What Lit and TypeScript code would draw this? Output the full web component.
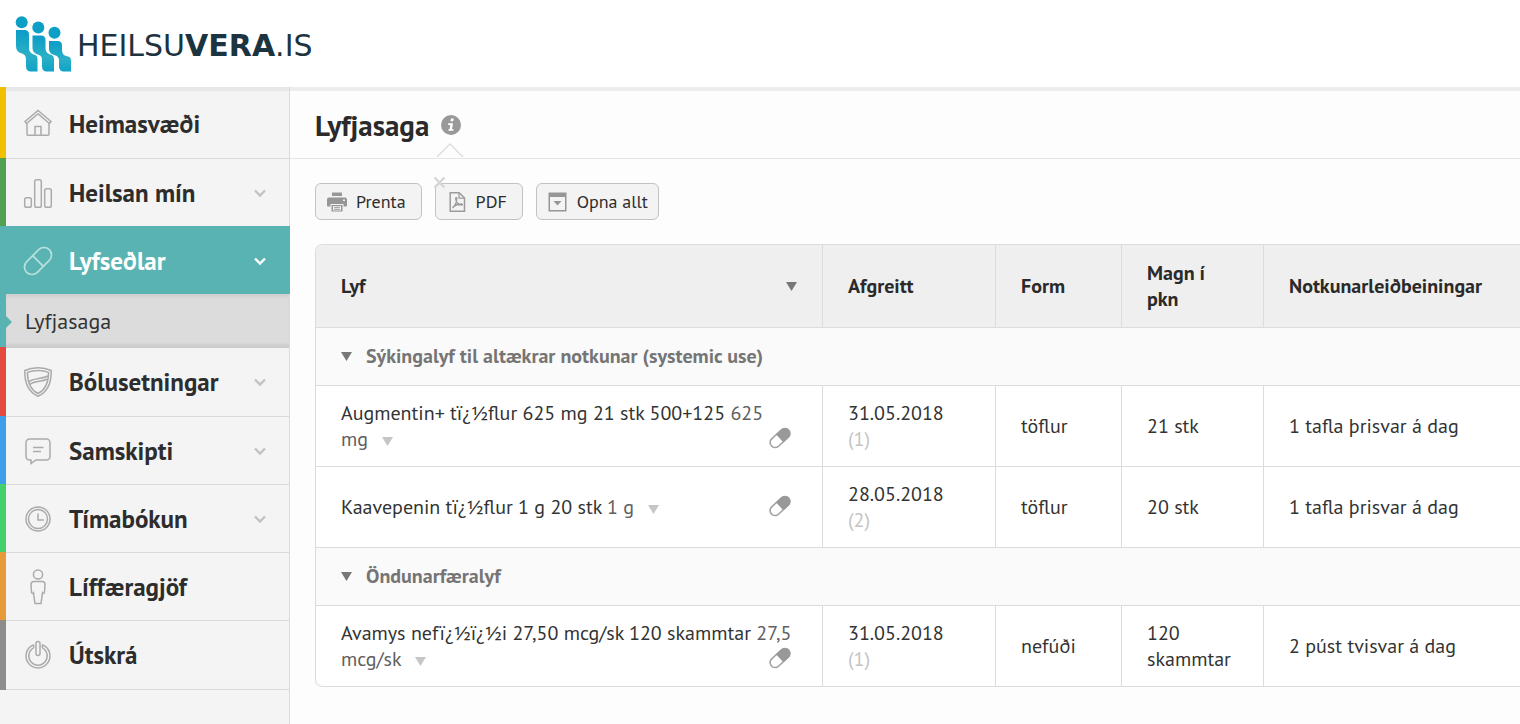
import { LitElement, html, css, svg, nothing, type TemplateResult } from "lit";
import { customElement, state } from "lit/decorators.js";
import { classMap } from "lit/directives/class-map.js";

interface MenuItem {
  id: string;
  label: string;
  icon: TemplateResult;
  expandable: boolean;
  active?: boolean;
  children?: string[];
}

interface Medicine {
  name: string;
  strength: string;
  strengthTail: string;
  date: string;
  count: number;
  form: string;
  amount: string;
  usage: string;
}

interface Group {
  title: string;
  rows: Medicine[];
}

const MENU: MenuItem[] = [
  {
    id: "home",
    label: "Heimasvæði",
    expandable: false,
    icon: svg`<path d="M2 12.500 15 1.500l13 11-1.600 2L15 4.800 3.600 14.500z"/><path d="M4 14.500V25.500a.8.800 0 0 0 .8.800h20.400a.8.800 0 0 0 .8-.8V14.500M12 26.300V17.500h6v8.800"/>`,
  },
  {
    id: "health",
    label: "Heilsan mín",
    expandable: true,
    icon: svg`<rect x="1.700" y="19.700" width="6.600" height="9.600" rx="1.800"/><rect x="11.700" y="1.700" width="6.600" height="27.600" rx="1.800"/><rect x="21.700" y="10.700" width="6.600" height="18.600" rx="1.800"/>`,
  },
  {
    id: "rx",
    label: "Lyfseðlar",
    expandable: true,
    active: true,
    children: ["Lyfjasaga"],
    icon: svg`<g transform="rotate(-45 15 15)"><rect x="-1" y="7.500" width="32" height="15" rx="7.500"/><path d="M15 7.500v15"/></g>`,
  },
  {
    id: "vaccine",
    label: "Bólusetningar",
    expandable: true,
    icon: svg`<path d="M15 .8c4 0 9.500 1 13.200 2.700C28.500 14 25.500 24.500 15 29.300 4.500 24.500 1.500 14 1.800 3.500 5.500 1.800 11 .8 15 .8z"/><path d="M15 3.500c3.600 0 7.800.7 10.600 1.900C25.500 14.300 23.300 22.300 15 26.500 6.700 22.300 4.500 14.300 4.400 5.400c2.800-1.200 7-1.900 10.600-1.900z"/><path d="M5.500 14.800C11.500 10.800 18 12.300 25 9M6.500 17.500c6-4 11.800-2.300 17.800-5.500"/>`,
  },
  {
    id: "messages",
    label: "Samskipti",
    expandable: true,
    icon: svg`<path d="M6.500 3h17a3.500 3.500 0 0 1 3.500 3.500v14a3.500 3.500 0 0 1-3.500 3.500H13l-5 3.500V24H6.500A3.500 3.500 0 0 1 3 20.500v-14A3.500 3.500 0 0 1 6.500 3zM10 11.500h10.500M10 15.500h8"/>`,
  },
  {
    id: "booking",
    label: "Tímabókun",
    expandable: true,
    icon: svg`<circle cx="15" cy="15" r="12"/><circle cx="15" cy="15" r="9.500"/><path d="M15 9.500V16h6"/>`,
  },
  {
    id: "donor",
    label: "Líffæragjöf",
    expandable: false,
    icon: svg`<circle cx="15" cy="2.500" r="4.600"/><path d="M11 9.500h8c2 0 3 1 3 3l-.5 7.500c0 1.500-1.200 1.800-2 .8L18 31.500h-6l-1.500-10.700c-.8 1-2 .7-2-.8L8 12.500c0-2 1-3 3-3z"/>`,
  },
  {
    id: "logout",
    label: "Útskrá",
    expandable: false,
    icon: svg`<rect x="13" y="1.500" width="4" height="14" rx="2"/><path d="M10.700 4.700a12 12 0 1 0 8.600 0M10.700 7.800a9.200 9.200 0 1 0 8.600 0M10.700 4.700v3.100M19.300 4.700v3.100"/>`,
  },
];

const GROUPS: Group[] = [
  {
    title: "Sýkingalyf til altækrar notkunar (systemic use)",
    rows: [
      {
        name: "Augmentin+ tï¿½flur 625 mg 21 stk 500+125",
        strength: "625",
        strengthTail: "mg",
        date: "31.05.2018",
        count: 1,
        form: "töflur",
        amount: "21 stk",
        usage: "1 tafla þrisvar á dag",
      },
      {
        name: "Kaavepenin tï¿½flur 1 g 20 stk",
        strength: "1",
        strengthTail: "g",
        date: "28.05.2018",
        count: 2,
        form: "töflur",
        amount: "20 stk",
        usage: "1 tafla þrisvar á dag",
      },
    ],
  },
  {
    title: "Öndunarfæralyf",
    rows: [
      {
        name: "Avamys nefï¿½ï¿½i 27,50 mcg/sk 120 skammtar",
        strength: "27,5",
        strengthTail: "mcg/sk",
        date: "31.05.2018",
        count: 1,
        form: "nefúði",
        amount: "120 skammtar",
        usage: "2 púst tvisvar á dag",
      },
    ],
  },
];

@customElement("site-header")
export class SiteHeader extends LitElement {
  static styles = css`
    :host {
      display: block;
      background: #fff;
    }
    .brand {
      display: inline-flex;
      align-items: center;
      gap: 5px;
      height: 87px;
      padding-left: 15px;
      color: #1b3440;
      text-decoration: none;
    }
    .mark {
      display: block;
      width: 57px;
      height: 56px;
      fill: #0d9fc6;
    }
    .word {
      font: 400 30px/32px "DejaVu Sans", sans-serif;
      padding-top: 4px;
    }
    .word strong {
      font-weight: 700;
    }
  `;

  render() {
    return html`
      <a class="brand" href="#">
        <svg class="mark" viewBox="0 0 57 56" aria-hidden="true">
          <defs>
            <linearGradient id="tone" x1="0" y1="0" x2="0" y2="1">
              <stop offset="0" stop-color="#0c9cc8" />
              <stop offset=".6" stop-color="#2ab0c6" />
              <stop offset="1" stop-color="#0fa2c6" />
            </linearGradient>
          </defs>
          <circle cx="6.700" cy="6.300" r="6" />
          <circle cx="23.300" cy="11.500" r="6" />
          <circle cx="39.500" cy="16.800" r="6" />
          <g fill="url(#tone)">
            <path d="M1 14h8.500c3 0 4.500 1.600 4.500 4.500V32c0 3.500 2 6 6.500 7 1.500.8 2 2.500 2 4.500v12h-6c-4 0-5.500-2-5.500-5.500V44c0-3.500-1-5.500-4-6.500C3 36.500 1 34 1 30z" />
            <path d="M17.500 19.500H26c3 0 4.500 1.600 4.500 4.500v8.500c0 3.500 2 5.500 6 6.500 2 .8 2.500 2.500 2.500 5v11.500h-6.500c-4 0-5.500-2-5.500-5.500V44c0-3-1-4.500-3.500-5.300-4-1-6-3.200-6-6.700z" />
            <path d="M34 25h8.500c3 0 4.500 1.600 4.500 4.500V34c0 3.500 1.500 5.500 5 6.200 3.500.6 4 2.300 4 4.800v10.500h-6.500c-4 0-5.500-2-5.500-5.500v-5.500c0-2.500-1-4-3.500-5-4-1-6.500-3-6.500-7z" />
          </g>
        </svg>
        <span class="word">HEILSU<strong>VERA</strong>.IS</span>
      </a>
    `;
  }
}

@customElement("side-menu")
export class SideMenu extends LitElement {
  static styles = css`
    :host {
      display: block;
      box-sizing: border-box;
      background: #f4f4f4;
      border-right: 1px solid #dcdcdc;
      font-family: "PT Sans", "Noto Sans", sans-serif;
    }
    .list,
    .sub {
      margin: 0;
      padding: 0;
      list-style: none;
    }
    .entry {
      padding-left: 6px;
      background: var(--tone);
    }
    .link {
      display: grid;
      grid-template-columns: 28px 1fr 12px;
      align-items: center;
      column-gap: 16px;
      box-sizing: border-box;
      height: 68px;
      padding: 0 23px 0 19px;
      border-top: 1px solid #d9d9d9;
      background: #f4f4f4;
      color: #2d2d2d;
      font-size: 25px;
      line-height: 32px;
      font-weight: 700;
      text-decoration: none;
    }
    .home {
      --tone: #f1bf00;
    }
    .home .link {
      height: 71px;
      padding-top: 3px;
      border-top: 0;
      box-shadow: inset 0 4px 0 #e7e7e7;
    }
    .health {
      --tone: #52a150;
    }
    .rx {
      --tone: #5ab3b3;
    }
    .vaccine {
      --tone: #e44b3e;
    }
    .vaccine .link {
      height: 69px;
      border-top-color: #cccccc;
    }
    .messages {
      --tone: #3f9ee8;
    }
    .booking {
      --tone: #43d16b;
    }
    .donor {
      --tone: #e79b38;
    }
    .logout {
      --tone: #8d8d8d;
    }
    .logout .link {
      height: 70px;
      border-bottom: 1px solid #d9d9d9;
    }
    .active .link {
      background: #5ab3b3;
      border-top-color: #5ab3b3;
      color: #fff;
      margin-right: -1px;
      padding-right: 24px;
    }
    .icon {
      width: 30px;
      height: 30px;
      margin-left: -2px;
      overflow: visible;
      fill: none;
      stroke: #ababab;
      stroke-width: 1.5;
    }
    .active .icon {
      stroke: #b9e0e0;
      stroke-width: 1.7;
    }
    .chevron {
      width: 12px;
      height: 12px;
      fill: none;
      stroke: #c2c2c2;
      stroke-width: 2.4;
    }
    .active .chevron {
      stroke: #fff;
    }
    .sublink {
      position: relative;
      display: block;
      padding: 13px 19px 12px;
      background: #dcdcdc;
      box-shadow:
        inset 0 4px 3px -1px #cfcfcf,
        inset 0 -4px 3px -1px #cccccc;
      color: #333;
      font-size: 22px;
      line-height: 28px;
      text-decoration: none;
    }
    .sublink::before {
      content: "";
      position: absolute;
      left: 0;
      top: 22px;
      border: 6px solid transparent;
      border-right: 0;
      border-left-color: #5ab3b3;
    }
  `;

  render() {
    return html`
      <nav aria-label="Valmynd">
        <ul class="list">
          ${MENU.map(
            (item) => html`
              <li class=${classMap({ entry: true, [item.id]: true, active: !!item.active })}>
                <a class="link" href="#${item.id}">
                  <svg class="icon" viewBox="0 0 30 30" aria-hidden="true">${item.icon}</svg>
                  <span>${item.label}</span>
                  ${item.expandable
                    ? html`<svg class="chevron" viewBox="0 0 12 12" aria-hidden="true">
                        <path d="M1 3.500 6 8.500l5-5" />
                      </svg>`
                    : nothing}
                </a>
                ${item.children
                  ? html`<ul class="sub">
                      ${item.children.map(
                        (child) => html`<li><a class="sublink" href="#${child}">${child}</a></li>`
                      )}
                    </ul>`
                  : nothing}
              </li>
            `
          )}
        </ul>
      </nav>
    `;
  }
}

@customElement("medicine-table")
export class MedicineTable extends LitElement {
  static styles = css`
    :host {
      display: block;
      overflow-x: auto;
      scrollbar-width: none;
      font-family: "PT Sans", "Noto Sans", sans-serif;
      color: #333;
    }
    .table {
      width: 100%;
      min-width: 1230px;
      table-layout: fixed;
      border-collapse: separate;
      border-spacing: 0;
      border: 1px solid #dcdcdc;
      border-bottom: 0;
      border-radius: 7px;
      background: #fff;
      font-size: 20px;
      line-height: 26px;
    }
    .c-drug {
      width: 506px;
    }
    .c-date {
      width: 173px;
    }
    .c-form {
      width: 126px;
    }
    .c-amount {
      width: 142px;
    }
    .head,
    .cell {
      padding: 14px 25px;
      border-bottom: 1px solid #dcdcdc;
      border-left: 1px solid #dcdcdc;
      text-align: left;
      vertical-align: middle;
    }
    .head:first-child,
    .cell:first-child {
      border-left: 0;
    }
    .head {
      padding: 15px 25px;
      background: #efefef;
      color: #2a2a2a;
      font-weight: 700;
    }
    .head:first-child {
      border-top-left-radius: 6px;
    }
    .last .cell:first-child {
      border-bottom-left-radius: 7px;
    }
    .sort,
    .toggle {
      display: flex;
      align-items: center;
      width: 100%;
      padding: 0;
      border: 0;
      background: none;
      color: inherit;
      font: inherit;
      text-align: left;
    }
    .sort {
      justify-content: space-between;
    }
    .toggle {
      gap: 14px;
    }
    .group {
      padding: 15px 25px 16px;
      border-bottom: 1px solid #dcdcdc;
      background: #fafafa;
      color: #757575;
      font-weight: 700;
      text-align: left;
    }
    .tri {
      width: 11px;
      height: 9px;
      fill: #777;
    }
    .tail {
      white-space: nowrap;
    }
    .strength {
      color: #606060;
    }
    .more {
      padding: 0;
      border: 0;
      margin-left: 9px;
      background: none;
      line-height: 0;
    }
    .more .tri {
      fill: #c6c6c6;
    }
    .pill {
      float: right;
      width: 22px;
      height: 22px;
      margin: 1px 6px 0 0;
    }
    .count {
      color: #c4c4c4;
      text-decoration: none;
    }
  `;

  private tri() {
    return html`<svg class="tri" viewBox="0 0 11 9" aria-hidden="true"><path d="M0 0h11L5.500 9z" /></svg>`;
  }

  private row(m: Medicine, last: boolean) {
    return html`
      <tr class=${classMap({ last })}>
        <td class="cell">
          ${m.name}
          <span class="strength"
            >${m.strength}
            <span class="tail"
              >${m.strengthTail}
              <button class="more" type="button" aria-label="Nánar">${this.tri()}</button></span
            ></span
          >
          <svg class="pill" viewBox="0 0 22 22" role="img" aria-label="Lyf">
            <g transform="rotate(-43 11 11)">
              <rect x="-.7" y="6" width="23.400" height="10" rx="5" fill="#fff" stroke="#a3a3a3" stroke-width="1.600" />
              <path d="M10.500 5.500h7.200a5.500 5.500 0 0 1 0 11h-7.200z" fill="#999" />
            </g>
          </svg>
        </td>
        <td class="cell">${m.date}<br /><a class="count" href="#log">(${m.count})</a></td>
        <td class="cell">${m.form}</td>
        <td class="cell">${m.amount}</td>
        <td class="cell">${m.usage}</td>
      </tr>
    `;
  }

  render() {
    return html`
      <table class="table">
        <colgroup>
          <col class="c-drug" />
          <col class="c-date" />
          <col class="c-form" />
          <col class="c-amount" />
          <col />
        </colgroup>
        <thead>
          <tr>
            <th class="head" scope="col">
              <button class="sort" type="button">Lyf ${this.tri()}</button>
            </th>
            <th class="head" scope="col">Afgreitt</th>
            <th class="head" scope="col">Form</th>
            <th class="head" scope="col">Magn í pkn</th>
            <th class="head" scope="col">Notkunarleiðbeiningar</th>
          </tr>
        </thead>
        ${GROUPS.map(
          (g, gi) => html`
            <tbody>
              <tr>
                <th class="group" colspan="5" scope="rowgroup">
                  <button class="toggle" type="button">${this.tri()} ${g.title}</button>
                </th>
              </tr>
              ${g.rows.map((m, i) => this.row(m, gi === GROUPS.length - 1 && i === g.rows.length - 1))}
            </tbody>
          `
        )}
      </table>
    `;
  }
}

@customElement("app-root")
export class AppRoot extends LitElement {
  @state() private tipOpen = true;

  static styles = css`
    :host {
      display: flex;
      flex-direction: column;
      min-height: 100vh;
      font-family: "PT Sans", "Noto Sans", sans-serif;
      color: #2a2a2a;
      background: #fdfdfd;
    }
    .body {
      flex: 1;
      display: grid;
      grid-template-columns: 290px minmax(0, 1fr);
    }
    .main {
      padding-top: 4px;
      background: #fdfdfd;
      box-shadow: inset 0 4px 0 #ededed;
    }
    .titlebar {
      display: flex;
      align-items: center;
      gap: 12px;
      height: 67px;
      padding-left: 25px;
      border-bottom: 1px solid #e6e6e6;
    }
    .title {
      margin: 0;
      font-size: 29px;
      line-height: 34px;
      font-weight: 700;
    }
    .info {
      position: relative;
      display: block;
      width: 20px;
      height: 20px;
      padding: 0;
      border: 0;
      background: none;
    }
    .badge {
      display: block;
      width: 20px;
      height: 20px;
    }
    .tip {
      position: absolute;
      left: -5px;
      top: 28px;
      width: 28px;
      height: 15px;
      fill: #fdfdfd;
      stroke: #dcdcdc;
      stroke-width: 1.3;
    }
    .tools {
      position: relative;
      display: flex;
      gap: 13px;
      padding: 24px 25px;
    }
    .close {
      position: absolute;
      left: 143px;
      top: 17px;
      width: 13px;
      height: 13px;
      padding: 0;
      border: 0;
      background: none;
      line-height: 0;
    }
    .cross {
      width: 13px;
      height: 13px;
      stroke: #d6d6d6;
      stroke-width: 2.4;
    }
    .button {
      display: flex;
      align-items: center;
      gap: 8px;
      height: 37px;
      padding: 0 15px 0 10px;
      border: 1px solid #c2c2c2;
      border-radius: 6px;
      background: #f3f3f3;
      color: #2d2d2d;
      font: 400 18px/24px "PT Sans", "Noto Sans", sans-serif;
    }
    .wide {
      padding-right: 10px;
    }
    .glyph {
      width: 22px;
      height: 22px;
      fill: #969696;
    }
    .content {
      padding-left: 25px;
    }
  `;

  render() {
    return html`
      <site-header></site-header>
      <div class="body">
        <side-menu></side-menu>
        <main class="main">
          <div class="titlebar">
            <h1 class="title">Lyfjasaga</h1>
            <button class="info" type="button" aria-label="Upplýsingar" @click=${() => (this.tipOpen = !this.tipOpen)}>
              <svg class="badge" viewBox="0 0 20 20" aria-hidden="true">
                <circle cx="10" cy="10" r="10" fill="#999" />
                <path
                  d="M10 3.500h2.800l-.6 2.800H9.400zM7.300 8.200h4.800L11 14h1.500l-.3 1.800H7.300l.4-1.800h.9l.7-4H7z"
                  fill="#fff"
                />
              </svg>
              ${this.tipOpen
                ? html`<svg class="tip" viewBox="0 0 28 15" aria-hidden="true"><path d="M1 14 14 1l13 13" /></svg>`
                : nothing}
            </button>
          </div>
          <div class="tools">
            <button class="button" type="button">
              <svg class="glyph" viewBox="0 0 22 22" aria-hidden="true">
                <path d="M6 1.500h10V5H6z" />
                <path
                  fill-rule="evenodd"
                  d="M3 6.500h16a2 2 0 0 1 2 2v6a1 1 0 0 1-1 1h-2.500V13h-13v2.500H2a1 1 0 0 1-1-1v-6a2 2 0 0 1 2-2zm14 2v1.500h2V8.500z"
                />
                <path fill-rule="evenodd" d="M5.500 14h11v6.500h-11zM7 15v4.500h8V15z" />
                <path d="M8 15.700h6v1H8zM8 17.800h6v1H8z" />
              </svg>
              Prenta
            </button>
            <button class="button" type="button">
              <svg class="glyph" viewBox="0 0 22 22" aria-hidden="true">
                <g fill="none" stroke="#9b9b9b" stroke-width="1.500">
                  <path d="M4.200 1.700h9l5.300 5.300v13.300H4.200z" />
                  <path d="M13 2v5.200h5.200" stroke-width="1.200" />
                  <path
                    d="M6.500 16.800c2-1 4.300-5 4.300-9.300 0-1.500-1.500-1.200-1.200.4.600 3.200 3.200 5.600 5.800 6.200 1.400.2 1.300-1.100-.2-1.100-3 0-6.700 1.700-8.400 3.100"
                    stroke-width="1.300"
                  />
                </g>
              </svg>
              PDF
            </button>
            <button class="button wide" type="button">
              <svg class="glyph" viewBox="0 0 22 22" aria-hidden="true">
                <path fill-rule="evenodd" d="M1.500 1.500h18v19h-18zM3 6v13h15V6z" />
                <path d="M6.500 10h8l-4 4.500z" />
              </svg>
              Opna allt
            </button>
            ${this.tipOpen
              ? html`<button class="close" type="button" aria-label="Loka" @click=${() => (this.tipOpen = false)}>
                  <svg class="cross" viewBox="0 0 13 13" aria-hidden="true"><path d="m1.500 1.500 10 10m0-10-10 10" /></svg>
                </button>`
              : nothing}
          </div>
          <div class="content">
            <medicine-table></medicine-table>
          </div>
        </main>
      </div>
    `;
  }
}
